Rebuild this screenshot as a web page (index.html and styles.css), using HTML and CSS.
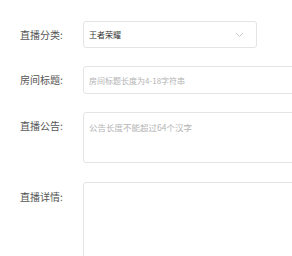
FILE: index.html
```html
<!DOCTYPE html>
<html>
  <head>
    <meta charset="utf-8" />
    <title>直播设置</title>
    <link rel="stylesheet" href="styles.css">
  </head>
  <body>
    <form class="live-form">
      <div class="form-row">
        <label class="form-label">直播分类:</label>
        <div class="select-box">
          <span class="select-value">王者荣耀</span>
          <svg class="select-arrow" width="9" height="6" viewBox="0 0 9 6">
            <path d="M1 1 L4.5 4.5 L8 1" fill="none" stroke="#c8c8c8" stroke-width="1" />
          </svg>
        </div>
      </div>
      <div class="form-row">
        <label class="form-label" for="room-title">房间标题:</label>
        <input id="room-title" class="text-input" type="text" placeholder="房间标题长度为4-18字符串" />
      </div>
      <div class="form-row">
        <label class="form-label" for="notice">直播公告:</label>
        <textarea id="notice" class="text-area notice-area" placeholder="公告长度不能超过64个汉字"></textarea>
      </div>
      <div class="form-row">
        <label class="form-label detail-label" for="detail">直播详情:</label>
        <textarea id="detail" class="text-area detail-area"></textarea>
      </div>
    </form>
  </body>
</html>
```

FILE: styles.css
```css
body {
  margin: 0;
  padding: 0;
  background: #fff;
  font-family: "Noto Sans CJK SC", "Noto Sans", sans-serif;
  overflow: hidden;
}

.live-form {
  padding: 21px 0 0 20px;
}

.form-row {
  display: flex;
  align-items: flex-start;
  margin-bottom: 18px;
}

.form-label {
  flex: none;
  width: 63px;
  line-height: 27px;
  font-size: 10px;
  color: #555;
}

.detail-label {
  line-height: 30px;
}

.select-box {
  box-sizing: border-box;
  width: 174px;
  height: 27px;
  border: 1px solid #e4e4e4;
  border-radius: 3px;
  padding: 0 12px 0 5px;
  display: flex;
  align-items: center;
  justify-content: space-between;
}

.select-value {
  font-size: 8px;
  color: #333;
}

.text-input,
.text-area {
  box-sizing: border-box;
  flex: none;
  width: 260px;
  border: 1px solid #e4e4e4;
  border-radius: 3px;
  font-family: inherit;
  font-size: 8px;
  color: #333;
  outline: none;
  resize: none;
}

.text-input {
  height: 28px;
  padding: 0 5px;
}

.text-area {
  padding: 8px 5px;
}

.notice-area {
  height: 51px;
  font-size: 8.5px;
  margin-bottom: 1px;
}

.detail-area {
  height: 90px;
}

.text-input::placeholder,
.text-area::placeholder {
  color: #b4b4b4;
}
```
